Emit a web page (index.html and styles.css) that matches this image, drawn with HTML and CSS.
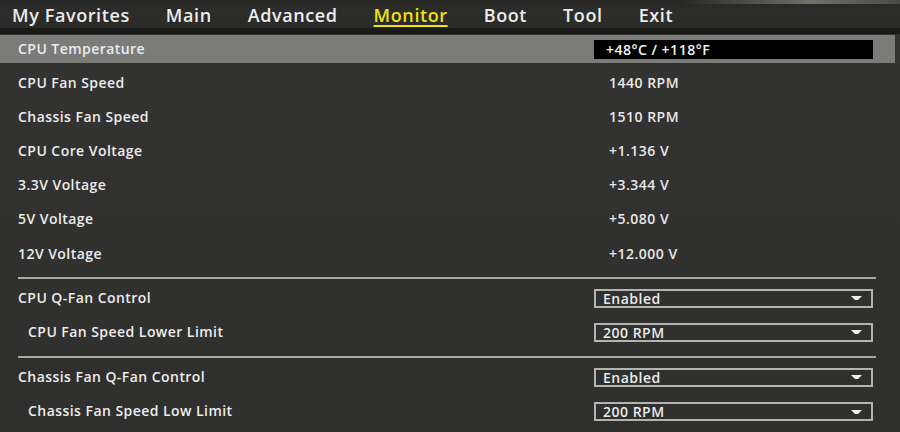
FILE: index.html
```html
<!DOCTYPE html>
<html>
<head>
<meta charset="utf-8">
<link rel="stylesheet" href="styles.css">
</head>
<body>
<div class="screen">
  <nav class="tabs">
    <span class="tab">My Favorites</span>
    <span class="tab">Main</span>
    <span class="tab">Advanced</span>
    <span class="tab active">Monitor</span>
    <span class="tab">Boot</span>
    <span class="tab">Tool</span>
    <span class="tab">Exit</span>
  </nav>
  <main class="content">
    <div class="row selected"><span class="label">CPU Temperature</span><span class="value box-black">+48°C / +118°F</span></div>
    <div class="row"><span class="label">CPU Fan Speed</span><span class="value plain">1440 RPM</span></div>
    <div class="row"><span class="label">Chassis Fan Speed</span><span class="value plain">1510 RPM</span></div>
    <div class="row"><span class="label">CPU Core Voltage</span><span class="value plain">+1.136 V</span></div>
    <div class="row"><span class="label">3.3V Voltage</span><span class="value plain">+3.344 V</span></div>
    <div class="row"><span class="label">5V Voltage</span><span class="value plain">+5.080 V</span></div>
    <div class="row"><span class="label">12V Voltage</span><span class="value plain">+12.000 V</span></div>
    <hr class="sep">
    <div class="row"><span class="label">CPU Q-Fan Control</span><span class="value select">Enabled<svg class="caret" viewBox="0 0 11 4" width="11" height="4"><path d="M0 0 H11 L7 4 H4 Z" fill="#f0f0f0"/></svg></span></div>
    <div class="row"><span class="label sub">CPU Fan Speed Lower Limit</span><span class="value select">200 RPM<svg class="caret" viewBox="0 0 11 4" width="11" height="4"><path d="M0 0 H11 L7 4 H4 Z" fill="#f0f0f0"/></svg></span></div>
    <hr class="sep sep2">
    <div class="row"><span class="label">Chassis Fan Q-Fan Control</span><span class="value select">Enabled<svg class="caret" viewBox="0 0 11 4" width="11" height="4"><path d="M0 0 H11 L7 4 H4 Z" fill="#f0f0f0"/></svg></span></div>
    <div class="row"><span class="label sub">Chassis Fan Speed Low Limit</span><span class="value select">200 RPM<svg class="caret" viewBox="0 0 11 4" width="11" height="4"><path d="M0 0 H11 L7 4 H4 Z" fill="#f0f0f0"/></svg></span></div>
  </main>
</div>
</body>
</html>
```
FILE: styles.css
```css
* { box-sizing: border-box; }
html, body { margin: 0; padding: 0; }
body {
  width: 900px;
  height: 432px;
  overflow: hidden;
  background: #111;
  font-family: "Open Sans", "Noto Sans", sans-serif;
  color: #ebebeb;
}
.screen {
  width: 900px;
  height: 432px;
  display: flex;
  flex-direction: column;
  background: #1a1a19;
}
.tabs {
  height: 28px;
  flex: none;
  display: flex;
  align-items: flex-start;
  padding: 4px 0 0 12px;
  background: linear-gradient(to bottom, #262624 0, #2d2d2b 40%, #2a2a28 100%);
  position: relative;
}
.tabs::before {
  content: "";
  position: absolute;
  top: 0;
  right: 0;
  width: 220px;
  height: 4px;
  background: linear-gradient(to right, rgba(160,165,150,0) 0, rgba(170,175,160,0.55) 60%, rgba(120,125,115,0.4) 100%);
}
.tab {
  font-size: 18px;
  font-weight: 600;
  line-height: 22px;
  color: #ececec;
  margin-right: 36px;
  letter-spacing: 0.6px;
}
.tab.active {
  color: #f0e10e;
  text-decoration: underline;
  text-decoration-thickness: 2px;
  text-underline-offset: 3px;
}
.content {
  flex: 1;
  margin-top: 6px;
  background: linear-gradient(to bottom, #333331, #2f2f2d);
  display: flex;
  flex-direction: column;
  padding: 1px 5px 0 0;
  border-bottom: 6px solid #151514;
}
.row {
  height: 28px;
  flex: none;
  display: flex;
  align-items: center;
  margin-bottom: 6.2px;
  padding-left: 18px;
}
.row.selected {
  background: #7b7b7a;
}
.label {
  width: 576px;
  font-size: 14px;
  font-weight: 600;
  letter-spacing: 0.45px;
  color: #ececec;
  margin-bottom: 2px;
}
.label.sub { padding-left: 10px; }
.value {
  font-size: 14px;
  font-weight: 600;
  letter-spacing: 0.5px;
  width: 279px;
  height: 19px;
  display: flex;
  align-items: center;
}
.box-black {
  background: #000;
  padding-left: 12px;
  color: #f4f4f4;
}
.plain {
  padding-left: 15px;
  color: #e8e8e8;
  margin-bottom: 2px;
}
.select {
  border: 2px solid #b3b3b1;
  padding-left: 7px;
  justify-content: space-between;
  padding-right: 9px;
}
.caret { display: block; }
.sep {
  border: 0;
  height: 2px;
  background: #a8a8a6;
  margin: 2.8px 19px 5px 18px;
  flex: none;
}
.sep2 { margin-top: 4px; }
```
